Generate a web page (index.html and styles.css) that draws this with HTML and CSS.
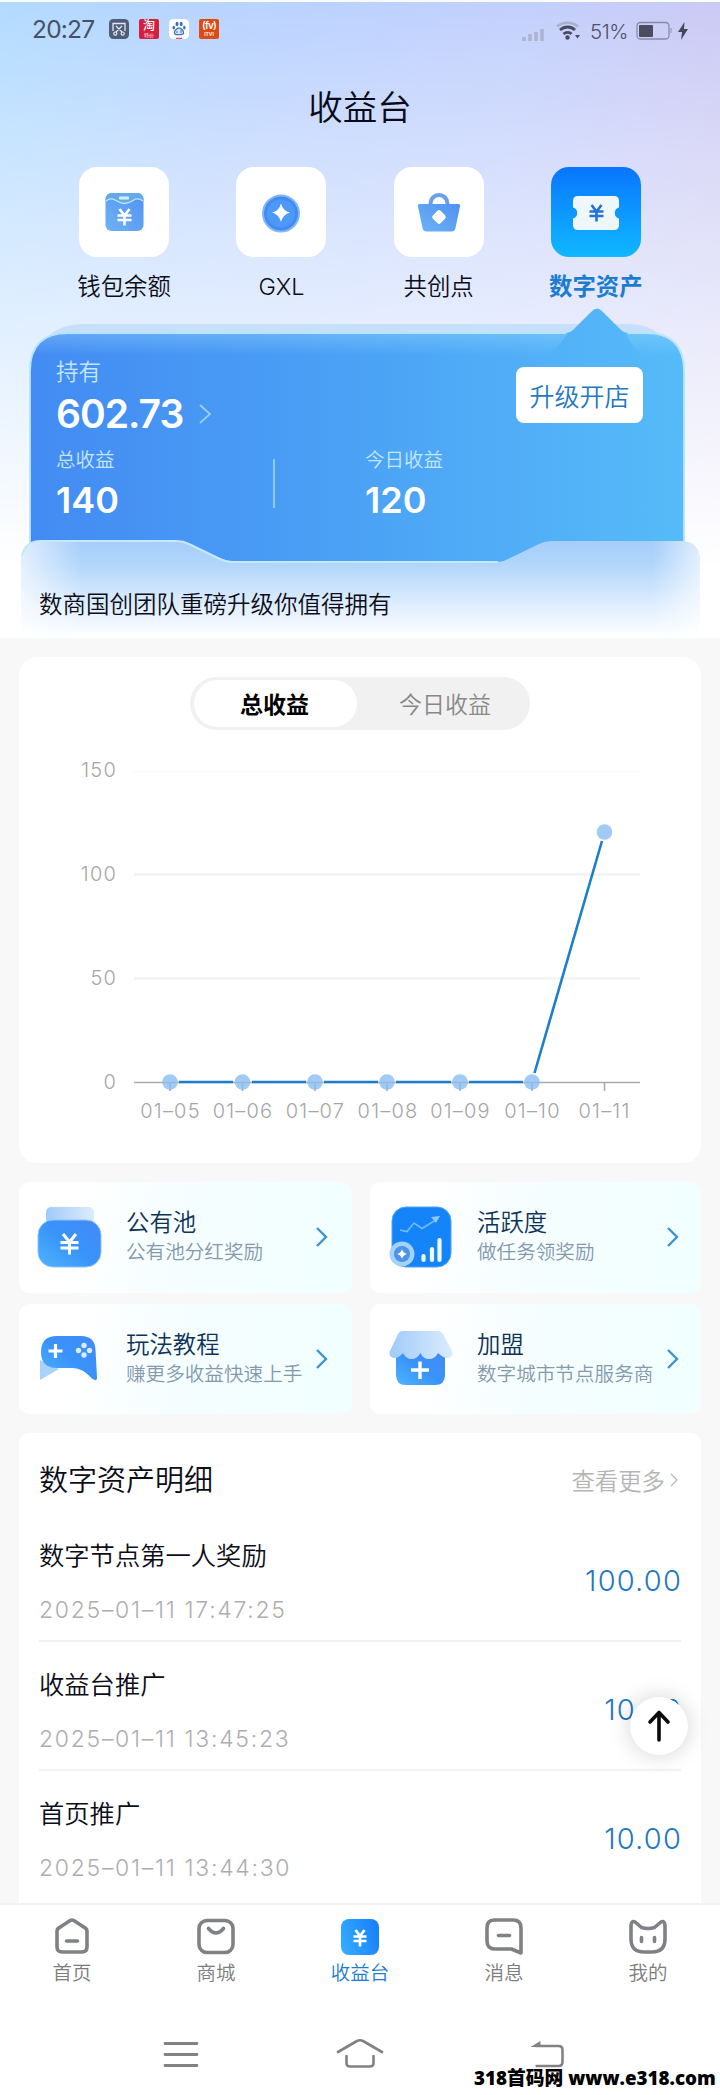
FILE: index.html
```html
<!DOCTYPE html>
<html lang="zh-CN">
<head>
<meta charset="utf-8">
<title>收益台</title>
<link rel="stylesheet" href="styles.css">
</head>
<body>
<div class="page">
  <header class="hero">
    <div class="status">
      <span class="clock">20:27</span>
      <svg class="app" viewBox="0 0 20 20"><rect width="20" height="20" rx="4.5" fill="#505d76"/><path d="M4 12V4.500h12V12M7 7l6 6M13 7l-6 6" fill="none" stroke="#dfe8f6" stroke-width="1.300"/><circle cx="6.300" cy="14.600" r="1.600" fill="none" stroke="#dfe8f6" stroke-width="1.200"/><circle cx="13.700" cy="14.600" r="1.600" fill="none" stroke="#dfe8f6" stroke-width="1.200"/></svg>
      <span class="app app-tao"><b>淘</b><i>特价</i></span>
      <svg class="app" viewBox="0 0 20 20"><rect width="20" height="20" rx="4.5" fill="#fff"/><g fill="#3a70c4"><ellipse cx="8" cy="5" rx="1.5" ry="2.2"/><ellipse cx="12.2" cy="5" rx="1.5" ry="2.2"/><ellipse cx="4.8" cy="8.6" rx="1.3" ry="1.9"/><ellipse cx="15.3" cy="8.6" rx="1.3" ry="1.9"/></g><path d="M10 8.8c2 0 5 3.300 4.600 5.300-.4 1.800-2.800 1.500-4.600 1.500s-4.200.3-4.600-1.500c-.4-2 2.600-5.300 4.600-5.300z" fill="#dbe9ff" stroke="#3a70c4" stroke-width="1.300"/><path d="M8 12v2M12 11v3" stroke="#3a70c4"/><path d="M7 19.300h6" stroke="#d44" stroke-width="1.200"/></svg>
      <span class="app app-itv"><b>(fv)</b><i>ITVI</i></span>
      <span class="grow"></span>
      <svg class="signal" viewBox="0 0 24 14" width="24" height="14"><path d="M2 14v-4M8 14V7M14 14V5M20 14V2" stroke="#adb4d2" stroke-width="3.600"/></svg>
      <svg class="wifi" viewBox="0 0 24 20" width="24" height="20" fill="none"><path d="M1 5.500c6-5 15-5 21 0" stroke="#a9b0cc" stroke-width="2.600"/><path d="M4 9c4.500-4 11-4 15 0M7.500 13c2.500-2.300 6-2.300 8 0" stroke="#474b5f" stroke-width="2.800"/><circle cx="11.500" cy="16.500" r="2.200" fill="#474b5f"/><path d="M19 14h5l-2.500 3.500z" fill="#474b5f"/></svg>
      <span class="percent">51%</span>
      <svg class="battery" viewBox="0 0 37 20" width="37" height="20"><rect x="1" y="1.500" width="32" height="16.500" rx="3.500" fill="none" stroke="#878aa8" stroke-width="1.300"/><rect x="3" y="4" width="14" height="12" rx="1" fill="#4b4c60"/><path d="M35 7v5" stroke="#a5a6c0" stroke-width="1.500"/></svg>
      <svg class="bolt" viewBox="0 0 10 18" width="10" height="18"><path d="M6.500 0L0 10h4L3 18 10 7H6z" fill="#46475c"/></svg>
    </div>
    <h1>收益台</h1>
    <nav class="wallets">
      <a class="wallet"><span class="tile"><svg viewBox="0 0 90 90">
        <defs><linearGradient id="soft" x1="0" y1="1" x2="1" y2="0"><stop offset="0" stop-color="#6fb2f5"/><stop offset="1" stop-color="#4f92f3"/></linearGradient></defs>
        <rect x="26.500" y="26" width="38" height="38" rx="6" fill="url(#soft)"/>
        <path d="M26.500 34q0-8 7-8h24q7 0 7 8-5-4-10-.5-9 6-18 0-5-3.500-10 .5z" fill="#64aae9"/>
        <path d="M27 34q5-4 10-.5 8.500 6 17 0 5-3.500 10 .5" fill="none" stroke="#c4e3ff" stroke-width="1.300"/>
        <rect x="40" y="29.500" width="10" height="3" rx="1" fill="#d9efff"/>
        <path d="M40.500 42l5 6.500 5-6.500M38.500 48.500h14M38.500 53h14M45.500 48v10.500" fill="none" stroke="#fff" stroke-width="2.600"/></svg></span><span class="label">钱包余额</span></a>
      <a class="wallet"><span class="tile"><svg viewBox="0 0 90 90"><circle cx="45" cy="46.500" r="18" fill="#438bf0" stroke="#7fb9f8" stroke-width="2"/><circle cx="45" cy="46.500" r="14" fill="#4d99f8"/><path d="M45 36.500q2 7.500 9 9-7 2-9 9.500-2-7.500-9-9.500 7-1.500 9-9z" fill="#fff"/></svg></span><span class="label">GXL</span></a>
      <a class="wallet"><span class="tile"><svg viewBox="0 0 90 90"><path d="M36.500 39v-2.500a8.500 8.500 0 0 1 17 0V39" fill="none" stroke="#699ff1" stroke-width="4"/><path d="M25.500 37h39q2 0 1.500 2.500L61.500 61q-.8 3.500-4 3.500h-25q-3.200 0-4-3.500L24 39.500Q23.500 37 25.500 37z" fill="url(#soft)"/><rect x="39.500" y="44.500" width="11" height="11" rx="2.500" transform="rotate(45 45 50)" fill="#fff"/></svg></span><span class="label">共创点</span></a>
      <a class="wallet active"><span class="tile"><svg viewBox="0 0 90 90"><path d="M27 29h36q5 0 5 5v6.500a5.700 5.700 0 0 0 0 11V58q0 5-5 5H27q-5 0-5-5v-6.500a5.700 5.700 0 0 0 0-11V34q0-5 5-5z" fill="#eef7fb"/><path d="M40.500 38l5 6.500 5-6.500M38.500 44.500h14M38.500 49h14M45.500 44v10.500" fill="none" stroke="#2372d4" stroke-width="2.600"/></svg></span><span class="label">数字资产</span></a>
    </nav>
    <section class="balance">
      <svg class="balance-bg" viewBox="0 302 720 336" width="720" height="336">
        <defs>
          <linearGradient id="card"><stop offset="0" stop-color="#438bf3"/><stop offset=".5" stop-color="#4ba2f5"/><stop offset="1" stop-color="#56bbf9"/></linearGradient>
          <linearGradient id="panel" x2="0" y2="1"><stop offset="0" stop-color="#a6ccfa"/><stop offset=".25" stop-color="#b2d6fb"/><stop offset=".65" stop-color="#deedfe"/><stop offset="1" stop-color="#fff"/></linearGradient>
          <linearGradient id="fade"><stop offset="0" stop-color="#fff" stop-opacity=".65"/><stop offset=".09" stop-color="#fff" stop-opacity="0"/><stop offset=".93" stop-color="#fff" stop-opacity="0"/><stop offset="1" stop-color="#fff" stop-opacity=".65"/></linearGradient>
          <linearGradient id="topglow" x2="0" y2="1"><stop offset="0" stop-color="#a0dcff" stop-opacity=".35"/><stop offset="1" stop-color="#a0dcff" stop-opacity="0"/></linearGradient>
        </defs>
        <path d="M30 380q6-56 54-56h546q38 0 50 50z" fill="#c6dffa"/>
        <path d="M30 562V371q0-38 38-38h498q4 0 7-3l18-18q6-7 12 0l18 18q3 3 7 3h18q38 0 38 38v191z" fill="url(#card)"/>
        <path d="M31 355q8-22 37-22h500q-6 10-20 22zM626 333h20q28 0 37 22h-40q-12-8-17-22z" fill="url(#topglow)"/>
        <path d="M30 560V371q0-38 38-38h498M628 333h18q38 0 38 38v189" fill="none" stroke="#b8e4ff" stroke-width="1.800"/>
        <path d="M21 638V561q0-20 20-20h136q6 0 12 3l31 15q6 3 12 3h266q5 0 10-3l31-15q6-3 12-3h129q20 0 20 20v77z" fill="url(#panel)"/>
        <path d="M21 638V561q0-20 20-20h136q6 0 12 3l31 15q6 3 12 3h266q5 0 10-3l31-15q6-3 12-3h129q20 0 20 20v77z" fill="url(#fade)"/>
        <path d="M22 556q3-15 19-15h136q6 0 12 3l31 15q6 3 12 3h266" fill="none" stroke="#c4e9ff" stroke-width="2"/>
      </svg>
      <div class="balance-body">
        <div class="holding">
          <div>
            <div class="cap-lg">持有</div>
            <div class="total">602.73<svg viewBox="0 0 12 20" width="12" height="20"><path d="M1 1l10 9-10 9" fill="none" stroke="#9bcfff" stroke-width="1.800"/></svg></div>
          </div>
          <button class="upgrade">升级开店</button>
        </div>
        <div class="stats">
          <div class="stat"><div class="cap">总收益</div><div class="num">140</div></div>
          <div class="rule"></div>
          <div class="stat"><div class="cap">今日收益</div><div class="num">120</div></div>
        </div>
        <p class="note">数商国创团队重磅升级你值得拥有</p>
      </div>
    </section>
  </header>

  <main>
    <section class="card chart-card">
      <div class="toggle"><span class="on">总收益</span><span>今日收益</span></div>
      <svg class="chart" viewBox="19 730 682 433" width="682" height="433">
        <path d="M134 771.500h506" stroke="#fafafa" stroke-width="2"/>
        <path d="M134 874.500h506M134 978.500h506" stroke="#f0f0f0" stroke-width="2"/>
        <path d="M134 1082.500h506M604.500 1082v9M170 1082v9M242.500 1082v9M315 1082v9M387 1082v9M460 1082v9M532 1082v9" stroke="#aaa" stroke-width="1.600"/>
        <path d="M179 1082h54M252 1082h54M324 1082h54M396 1082h55M469 1082h54M534.500 1073L602 841" stroke="#1d7fcb" stroke-width="2.600"/>
        <g fill="#8abdf3" fill-opacity=".8"><circle cx="170" cy="1082" r="7.800"/><circle cx="242.500" cy="1082" r="7.800"/><circle cx="315" cy="1082" r="7.800"/><circle cx="387" cy="1082" r="7.800"/><circle cx="460" cy="1082" r="7.800"/><circle cx="532" cy="1082" r="7.800"/><circle cx="604.500" cy="832" r="7.800"/></g>
        <g class="axis" text-anchor="end"><text x="117" y="777">150</text><text x="117" y="881">100</text><text x="117" y="985">50</text><text x="117" y="1089">0</text></g>
        <g class="axis" text-anchor="middle"><text x="170.500" y="1118">01–05</text><text x="243" y="1118">01–06</text><text x="315.500" y="1118">01–07</text><text x="388" y="1118">01–08</text><text x="460.500" y="1118">01–09</text><text x="532.500" y="1118">01–10</text><text x="604.500" y="1118">01–11</text></g>
      </svg>
    </section>

    <section class="features">
      <a class="feature"><svg class="pic" viewBox="0 0 66 66">
        <defs><linearGradient id="blue" x1="0" y1="1" x2="1" y2="0"><stop offset="0" stop-color="#4db4fb"/><stop offset=".5" stop-color="#3993fa"/><stop offset="1" stop-color="#4489f6"/></linearGradient><linearGradient id="lid"><stop offset="0" stop-color="#9fcbfa"/><stop offset="1" stop-color="#dcecfd"/></linearGradient></defs>
        <rect x="10" y="3" width="48" height="17" rx="5" fill="url(#lid)"/><rect x="2" y="16" width="63" height="47" rx="15" fill="url(#blue)" stroke="#8ec4fb"/><path d="M27 30l6.500 8 6.500-8M24.500 38.500h18M24.500 44h18M33.500 38v12.500" fill="none" stroke="#fff" stroke-width="3"/></svg>
        <span class="words"><b>公有池</b><i>公有池分红奖励</i></span><svg class="go" viewBox="0 0 12 20"><path d="M1 1l9 9-9 9"/></svg></a>
      <a class="feature"><svg class="pic" viewBox="0 0 66 66">
        <rect x="5" y="3" width="59" height="60" rx="14" fill="#1584f8" stroke="#4ba5fb"/><path d="M13 26l7 1.500 7-8.500 8 5.500 13-8" fill="none" stroke="#72bbfc" stroke-width="1.600"/><path d="M44 13l9-1-4 7z" fill="#8ccaff"/><path d="M36.500 56v-4M45 56V45M52.500 56V36" stroke="#eef8ff" stroke-width="4.200" stroke-linecap="round"/><circle cx="15" cy="50" r="12.500" fill="#a4d2fb"/><circle cx="15" cy="50" r="8" fill="#4a94ea"/><path d="M15 45q1 4 5 5-4 1-5 5-1-4-5-5 4-1 5-5z" fill="#fff"/></svg>
        <span class="words"><b>活跃度</b><i>做任务领奖励</i></span><svg class="go" viewBox="0 0 12 20"><path d="M1 1l9 9-9 9"/></svg></a>
      <a class="feature"><svg class="pic" viewBox="0 0 66 66">
        <path d="M4 34v20l19-11z" fill="#a9d3fc"/><path d="M21 10h24q14 0 14.500 14L61 51q.3 5-4.500 2-10-11-19.500-11H21Q5 42 5 26 5 10 21 10z" fill="url(#blue)"/><path d="M12.500 25h14M19.500 18v14" stroke="#fff" stroke-width="3.200"/><g fill="#d5edff"><circle cx="48" cy="19.500" r="2.700"/><circle cx="48" cy="29" r="2.700"/><circle cx="42.500" cy="24.500" r="2.700"/><circle cx="53.500" cy="24.500" r="2.700"/></g></svg>
        <span class="words"><b>玩法教程</b><i>赚更多收益快速上手</i></span><svg class="go" viewBox="0 0 12 20"><path d="M1 1l9 9-9 9"/></svg></a>
      <a class="feature"><svg class="pic" viewBox="0 0 66 66">
        <path d="M9 25h49v24q0 10-10 10H19Q9 59 9 49z" fill="url(#blue)"/><path d="M16 5h34q5 0 7 5l8 15q2 6-4 7-5 0-10-5-3 6-9 6t-8.500-6q-3.500 6-9 6t-8.500-6q-4 5-9 5-6-1-4-7l7-15q2-5 6-5z" fill="url(#lid)"/><path d="M24 44h18M33 35.500v17.500" stroke="#fff" stroke-width="3.400"/></svg>
        <span class="words"><b>加盟</b><i>数字城市节点服务商</i></span><svg class="go" viewBox="0 0 12 20"><path d="M1 1l9 9-9 9"/></svg></a>
    </section>

    <section class="card details">
      <div class="details-head"><h2>数字资产明细</h2><a>查看更多<svg viewBox="0 0 8 14" width="8" height="14"><path d="M1 1l6 6-6 6" fill="none" stroke="#bbb" stroke-width="1.400"/></svg></a></div>
      <div class="item"><div><div class="name">数字节点第一人奖励</div><div class="date">2025–01–11 17:47:25</div></div><div class="amount">100.00</div></div>
      <div class="item"><div><div class="name">收益台推广</div><div class="date">2025–01–11 13:45:23</div></div><div class="amount">10.00</div></div>
      <div class="item"><div><div class="name">首页推广</div><div class="date">2025–01–11 13:44:30</div></div><div class="amount">10.00</div></div>
    </section>
  </main>

  <nav class="tabs">
    <a><svg viewBox="0 0 40 40"><path d="M5 15q0-2 1.800-3.100l11-7.200q2.200-1.300 4.400 0l11 7.200Q35 13 35 15v16q0 5-5 5H10q-5 0-5-5z"/><path d="M14.500 25h11" stroke-linecap="round"/></svg>首页</a>
    <a><svg viewBox="0 0 40 40"><rect x="3" y="4.500" width="34" height="32" rx="8"/><path d="M12.500 12.500q7.500 9 15 0" stroke-linecap="round"/></svg>商城</a>
    <a class="active"><svg viewBox="0 0 40 40"><defs><linearGradient id="tab" x1="0" y1=".7" x2="1" y2=".4"><stop offset="0" stop-color="#34acff"/><stop offset="1" stop-color="#1980fb"/></linearGradient></defs><rect x="1" y="3" width="38" height="36" rx="8" fill="url(#tab)" stroke="none"/><path d="M15.500 14l4.500 6 4.500-6M13.500 20.500h13M13.500 25h13M20 20v10.500" stroke="#fff" stroke-width="2.700"/></svg>收益台</a>
    <a><svg viewBox="0 0 40 40"><path d="M10 4h19q8 0 8 8v25l-9.500-4H11q-8 0-8-8V12q0-8 7-8z" stroke-linejoin="round"/><path d="M14.500 19.500h11" stroke-linecap="round"/></svg>消息</a>
    <a><svg viewBox="0 0 40 40"><path d="M3 10q0-5.500 4-4l6.500 5.500q6.500 2 13 0L33 6q4-1.500 4 4v13q0 13-13 13h-8Q3 36 3 23z"/><path d="M13.500 21.500v4M26.500 21.500v4" stroke-linecap="round" stroke-width="3.600"/></svg>我的</a>
  </nav>
  <div class="sysnav">
    <svg viewBox="0 0 48 32" width="48" height="32"><path d="M9 5.500h32M9 16.500h32M9 27.500h32" stroke-width="2.800" stroke-linecap="round"/></svg>
    <svg viewBox="0 0 48 32" width="48" height="32"><path d="M2 14L21 3q3-1.500 6 0l19 11M10.500 18v7q0 3.500 3.500 3.500h20q3.500 0 3.500-3.500v-7" stroke-width="2.600" stroke-linecap="round"/></svg>
    <svg viewBox="-4 0 48 32" width="48" height="32"><path d="M17 8h23q4 0 4 4v12q0 4-4 4H17" stroke-width="2.600" transform="translate(-1.500 0)"/><path d="M12 9l10-6v6z" fill="#828282" stroke="none" transform="translate(-1.500 0)"/></svg>
  </div>
  <button class="to-top"><svg viewBox="0 0 24 34" width="24" height="34"><path d="M12 31V4M3 13l9-9.500 9 9.500" fill="none" stroke="#0b0b0b" stroke-width="3.600" stroke-linecap="round" stroke-linejoin="round"/></svg></button>
  <div class="mark">318首码网 www.e318.com</div>
</div>
</body>
</html>
```
FILE: styles.css
```css
* { box-sizing: border-box; }
body { margin: 0; font-family: Inter, "Noto Sans CJK SC", sans-serif; font-weight: 350; color: #0c0d18; }
h1, h2, p { margin: 0; font-weight: 350; }
i { font-style: normal; }
button { border: 0; padding: 0; font: inherit; }
svg { flex: none; }
.page { position: relative; width: 720px; height: 2095px; overflow: hidden; display: flex; flex-direction: column; background: #fff; }

.hero {
  height: 638px; flex: none; border-top: 2px solid #fafcff;
  background:
    linear-gradient(180deg, rgba(255,255,255,0) 0, rgba(255,255,255,.3) 150px, rgba(248,251,255,.62) 300px, rgba(255,255,255,.86) 480px, #fff 565px),
    linear-gradient(100deg, #b2dbff 0, #b9d3ff 28%, #c3d0fc 65%, #cfc6f0 100%);
}
.status { height: 58px; padding: 0 32px; display: flex; align-items: center; color: #46506a; }
.clock { width: 77px; margin-top: -4px; font-size: 24.500px; font-weight: 400; letter-spacing: -.8px; white-space: nowrap; }
.app { width: 20px; height: 20px; margin: -4px 10px 0 0; }
.app-tao, .app-itv { display: flex; flex-direction: column; align-items: center; border-radius: 2px; color: #fff; background: #d3203f; }
.app-tao b { font-size: 12px; line-height: 13px; font-weight: 500; }
.app-tao i { font-size: 5px; line-height: 6px; }
.app-itv { background: #dd4a14; }
.app-itv b { font-size: 10px; line-height: 13px; letter-spacing: -.8px; font-weight: 600; }
.app-itv i { font-size: 5px; line-height: 5px; font-weight: 600; }
.grow { flex: 1; }
.signal { margin: 6px 10px 0 0; }
.wifi { margin-right: 10px; }
.percent { width: 46px; font-size: 20.500px; letter-spacing: -.5px; color: #4d516a; }
.battery { margin-right: 5px; }
h1 { height: 96px; line-height: 96px; text-align: center; font-size: 34.500px; color: #090b18; }
.wallets { margin-top: 11px; padding: 0 45.500px; display: grid; grid-template-columns: repeat(4, 1fr); }
.wallet { display: flex; flex-direction: column; align-items: center; }
.tile { width: 90px; height: 90px; border-radius: 18px; background: #fff; overflow: hidden; }
.tile svg { display: block; width: 90px; height: 90px; }
.active .tile { background: linear-gradient(#0876fe, #10b8ff); }
.label { margin-top: 15px; height: 30px; line-height: 30px; font-size: 23.400px; white-space: nowrap; }
.active .label { color: #1c7cd0; font-weight: 700; }

.balance { display: grid; height: 336px; }
.balance-bg, .balance-body { grid-area: 1 / 1; }
.balance-body { padding: 55px 39px 0; color: #fff; z-index: 1; }
.holding { display: flex; justify-content: space-between; padding: 0 38px 0 17px; }
.cap-lg { line-height: 30px; font-size: 22.500px; color: #c5e6ff; }
.total { display: flex; align-items: center; gap: 16px; margin-top: 2px; line-height: 50px; font-size: 39px; font-weight: 600; letter-spacing: -1px; }
.upgrade { margin-top: 10px; width: 127px; height: 56px; border-radius: 8px; background: #fff; color: #2378c2; font-size: 25px; white-space: nowrap; }
.stats { display: flex; margin-top: 7px; padding-left: 17px; }
.stats .stat:first-child { width: 217px; }
.rule { width: 2px; height: 49px; margin: 13px 90px 0 0; background: #8accff; }
.cap { line-height: 28px; font-size: 19.500px; color: #c5e6ff; }
.num { margin-top: 4px; line-height: 44px; font-size: 36px; font-weight: 600; }
.note { margin-top: 67px; line-height: 31px; font-size: 23.500px; color: #0c0d18; }

main { background: #f8f8f8; padding: 19px 19px 0; height: 1265px; flex: none; overflow: hidden; }
.card { background: #fff; border-radius: 18px; }
.chart-card { height: 506px; padding-top: 20px; }
.toggle { width: 340px; height: 53px; margin: 0 auto; padding: 3px 4px; display: flex; border-radius: 27px; background: #f1f1f1; color: #888; }
.toggle span { flex: 1; padding-left: 7px; line-height: 50px; text-align: center; font-size: 23px; }
.toggle .on { flex: 0 0 163px; padding: 0 2px 0 0; height: 47px; border-radius: 24px; background: #fff; color: #000; font-weight: 700; }
.chart { display: block; }
.axis { font-size: 20px; font-weight: 300; fill: #a6a6a6; letter-spacing: 1.200px; }

.features { margin-top: 19px; display: grid; grid-template-columns: 333px 331px; grid-auto-rows: 110.500px; gap: 11px 18px; }
.feature { display: flex; align-items: center; padding-left: 17px; border-radius: 10px; background: linear-gradient(100deg, #fff 18%, #f6feff 45%, #f1ffff 100%); }
.pic { width: 66px; height: 66px; }
.words { width: 190px; padding: 1px 0 0 24px; white-space: nowrap; }
.words b { display: block; line-height: 30px; font-size: 23.400px; font-weight: 350; color: #0f3357; }
.words i { display: block; line-height: 29px; font-size: 19.600px; color: #8499ad; }
.go { width: 12px; height: 20px; margin-left: 24px; fill: none; stroke: #3c94cf; stroke-width: 2.400; }

.details { margin-top: 19px; height: 490px; border-radius: 10px 10px 0 0; padding: 0 20px; }
.details-head { height: 80px; padding-top: 14px; display: flex; justify-content: space-between; align-items: center; }
h2 { font-size: 29px; line-height: 38px; margin-top: 2px; }
.details-head a { display: flex; align-items: center; gap: 5px; padding-right: 3px; font-size: 23.400px; color: #b5b5b5; }
.item { height: 129px; display: flex; justify-content: space-between; border-bottom: 2px solid #f2f2f2; }
.item:last-child { border-bottom: 0; }
.name { margin-top: 28px; line-height: 30px; font-size: 25.300px; }
.date { margin-top: 24px; line-height: 30px; font-size: 23px; font-weight: 300; letter-spacing: 1.700px; color: #aeaeae; }
.amount { margin-top: 48px; line-height: 40px; font-size: 29px; letter-spacing: 1.200px; margin-right: -1px; color: #2378c2; }

.tabs { height: 95px; flex: none; border-top: 2px solid #f2f2f2; padding-top: 11px; display: grid; grid-template-columns: repeat(5, 1fr); }
.tabs a { display: flex; flex-direction: column; align-items: center; font-size: 19.500px; line-height: 30px; color: #7d7d7d; }
.tabs svg { width: 40px; height: 40px; margin-bottom: 2px; fill: none; stroke: #7f8184; stroke-width: 3.600; }
.tabs .active { color: #1c7cd0; }
.sysnav { display: flex; justify-content: center; gap: 132px; padding-top: 40px; stroke: #828282; }
.sysnav svg { fill: none; }
.to-top { position: absolute; left: 630px; top: 1697px; width: 58px; height: 58px; border-radius: 50%; background: #fff; box-shadow: 0 0 22px rgba(0,0,0,.18); display: grid; place-items: center; }
.mark { position: absolute; left: 474px; top: 2065px; font: 800 18.800px/26px "Open Sans", "Noto Sans CJK SC", sans-serif; color: #000; white-space: nowrap; text-shadow: 0 0 2px #fff, 1px 1px 0 #fff, -1px -1px 0 #fff; }
```
